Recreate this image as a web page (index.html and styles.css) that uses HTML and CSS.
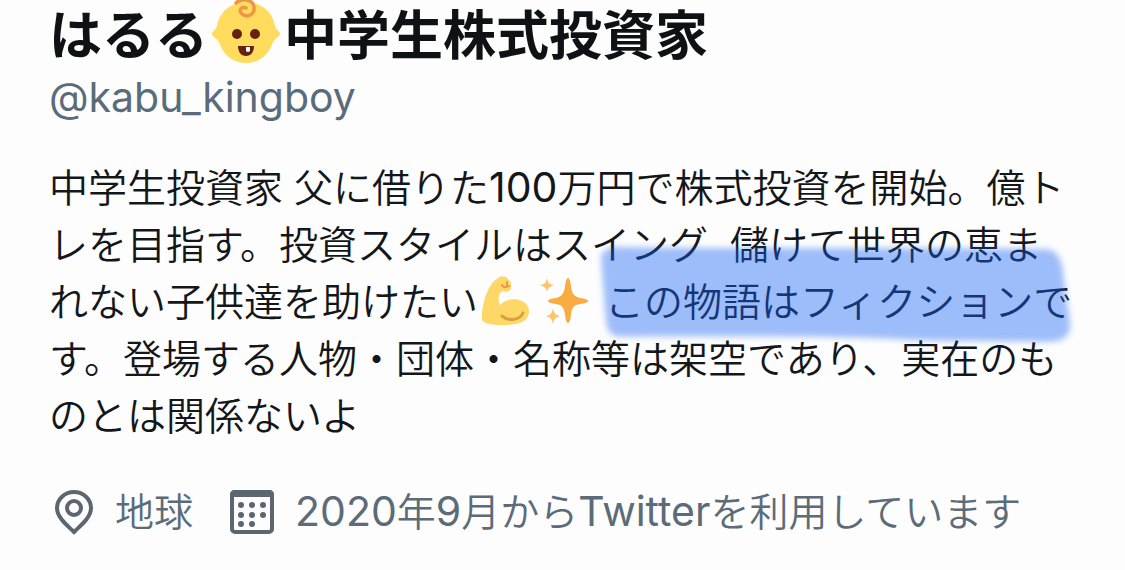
FILE: index.html
```html
<!DOCTYPE html>
<html lang="ja">
<head>
    <meta charset="UTF-8">
    <meta name="viewport" content="width=device-width, initial-scale=1.0">
    <title>はるる中学生株式投資家</title>
    <link rel="stylesheet" href="styles.css">
</head>
<body>

<main class="profile">
    <h1 class="name">はるる<svg class="baby" viewBox="0 0 72 66" role="img" aria-label="赤ちゃん">
        <path fill="#ffdc5d" d="M36 3C20 3 9 14 7 27C6 31 2 32 2 35C2 38 7 39 9 43C13 56 23 64 36 64S59 56 63 43C65 39 70 38 70 35C70 32 66 31 65 27C63 14 52 3 36 3Z"/>
        <path fill="none" stroke="#ee9547" stroke-width="3.5" stroke-linecap="round" d="M26 4C31 -1 43 0 44 8C45 16 37 19 32 15C28 11 32 7 36 9"/>
        <circle cx="27" cy="35" r="5" fill="#662113"/>
        <circle cx="45" cy="35" r="5" fill="#662113"/>
        <path fill="#662113" d="M28 47H44C44 53 41 57 36 57S28 53 28 47Z"/>
        <path fill="#fff" d="M36 48H40V52Q38 54 36 52Z"/>
    </svg>中学生株式投資家</h1>
    <p class="handle">@kabu_kingboy</p>

    <p class="bio">中学生投資家 父に借りた<span class="latin">100</span>万円で株式投資を開始。億トレを目指す。投資スタイルはスイング&nbsp; 儲けて世界の恵まれない子供達を助けたい<svg class="emoji" viewBox="0 0 54 54" role="img" aria-label="力こぶ">
        <path fill="#fdd868" d="M20 4C23 1 28 2 31 6C34 9 34 15 31 17C28 19 25 16 23 18C20 21 20 27 22 31C27 25 37 24 44 27C51 30 53 38 49 44C45 50 34 51 24 51C15 51 6 50 4 46C3 34 8 15 16 7Z"/>
        <path fill="none" stroke="#ef9645" stroke-width="2" stroke-linecap="round" d="M24 11Q26 15 31 12M29 8V11"/>
        <path fill="none" stroke="#d9a03c" stroke-width="3" stroke-linecap="round" d="M24 42C31 48 42 46 45 39"/>
    </svg><svg class="emoji" viewBox="0 0 54 54" role="img" aria-label="きらきら">
        <path fill="#f8ac42" d="M32 4Q34 4 35 12C36 20 38 22 44 24Q52 25 52 27T44 30C38 31 36 33 35 41Q34 49 32 49T29 41C28 33 26 31 20 30Q12 29 12 27T20 24C26 22 28 20 29 12Q30 4 32 4Z"/>
        <path fill="#fdc56a" d="M11 4C12 9 13 10 18 11C13 13 12 14 11 18C10 14 9 13 4 11C9 10 10 9 11 4Z"/>
        <path fill="#fdc56a" d="M17 34C18 39 19 41 24 42C19 44 18 45 17 50C16 45 15 44 10 42C15 41 16 39 17 34Z"/>
    </svg> <span class="marked">この物語はフィクションで<svg class="marker" viewBox="0 0 474 96" preserveAspectRatio="none" aria-hidden="true">
        <path d="M4 12Q6 2 30 3C160 5 330 3 450 5Q464 8 465 30L472 76Q472 92 450 92C390 91 340 92 290 89C200 86 90 87 22 87Q10 86 9 72Z"/>
    </svg></span>す。登場する人物・団体・名称等は架空であり、実在のものとは関係ないよ</p>

    <ul class="details">
        <li class="detail">
            <svg class="icon" viewBox="0 0 46 46" aria-hidden="true">
                <path d="M25 43C19 37 8 29 8 19A17 16 0 0 1 42 19C42 29 31 37 25 43Z"/>
                <circle cx="25" cy="19" r="7"/>
            </svg>
            <span>地球</span>
        </li>
        <li class="detail">
            <svg class="icon" viewBox="0 0 46 46" aria-hidden="true">
                <rect x="3" y="3" width="40" height="40" rx="3"/>
                <path class="solid" d="M1 8V6Q1 1 6 1H40Q45 1 45 6V8Z"/>
                <g class="solid">
                    <circle cx="12" cy="16" r="3"/><circle cx="23" cy="16" r="3"/><circle cx="34" cy="16" r="3"/>
                    <circle cx="12" cy="26" r="3"/><circle cx="23" cy="26" r="3"/><circle cx="34" cy="26" r="3"/>
                    <circle cx="12" cy="35" r="3"/><circle cx="23" cy="35" r="3"/>
                </g>
            </svg>
            <span><span class="latin">2020</span>年<span class="latin">9</span>月から<span class="latin">Twitter</span>を利用しています</span>
        </li>
    </ul>
</main>

</body>
</html>
```
FILE: styles.css
```css
* { margin: 0; padding: 0; box-sizing: border-box; }
body {
    font-family: Inter, "Noto Sans CJK JP", sans-serif;
    font-size: 39px; line-height: 57px; font-weight: 350;
    background: #fdfdfd; color: #14171a;
}
.latin { font-size: 41px; line-height: 1; font-weight: 400; }
.profile { padding: 4px 46px 24px 49px; }
.name { font-size: 53px; line-height: 64px; font-weight: 700; color: #0f1114; }
.baby { width: 72px; height: 66px; margin: -8px 2px 0; vertical-align: -10px; }
.handle { font-size: 41px; line-height: 58px; font-weight: 400; color: #5b6b78; }
.bio { margin-top: 33px; }
.emoji { width: 54px; height: 54px; margin-right: 4px; vertical-align: -12px; }
.marked { position: relative; }
.marker {
    position: absolute; left: -8px; top: -34px;
    width: calc(100% + 8px); height: 102px; overflow: visible;
    fill: rgba(25, 98, 246, 0.42); filter: blur(3px);
    pointer-events: none;
}
.details { display: flex; gap: 36px; margin-top: 39px; list-style: none; color: #5b6b78; }
.detail { display: flex; align-items: center; gap: 20px; white-space: nowrap; }
.icon { width: 46px; height: 46px; fill: none; stroke: #5b6670; stroke-width: 4; }
.icon .solid { fill: #5b6670; stroke: none; }
```
